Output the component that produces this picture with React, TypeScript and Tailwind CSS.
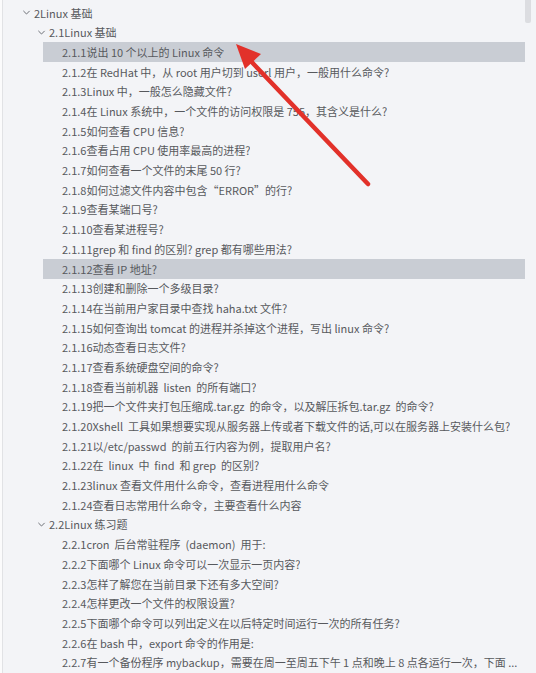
import React from "react"

type Row = { text: string; level: 0 | 1 | 2; open?: boolean; active?: boolean }

const rows: Row[] = [
  { text: "2Linux 基础", level: 0, open: true },
  { text: "2.1Linux 基础", level: 1, open: true },
  { text: "2.1.1说出 10 个以上的 Linux 命令", level: 2, active: true },
  { text: "2.1.2在 RedHat 中，从 root 用户切到 userl 用户，一般用什么命令?", level: 2 },
  { text: "2.1.3Linux 中，一般怎么隐藏文件?", level: 2 },
  { text: "2.1.4在 Linux 系统中，一个文件的访问权限是 755，其含义是什么?", level: 2 },
  { text: "2.1.5如何查看 CPU 信息?", level: 2 },
  { text: "2.1.6查看占用 CPU 使用率最高的进程?", level: 2 },
  { text: "2.1.7如何查看一个文件的末尾 50 行?", level: 2 },
  { text: "2.1.8如何过滤文件内容中包含“ERROR”的行?", level: 2 },
  { text: "2.1.9查看某端口号?", level: 2 },
  { text: "2.1.10查看某进程号?", level: 2 },
  { text: "2.1.11grep 和 find 的区别? grep 都有哪些用法?", level: 2 },
  { text: "2.1.12查看 IP 地址?", level: 2, active: true },
  { text: "2.1.13创建和删除一个多级目录?", level: 2 },
  { text: "2.1.14在当前用户家目录中查找 haha.txt 文件?", level: 2 },
  { text: "2.1.15如何查询出 tomcat 的进程并杀掉这个进程，写出 linux 命令?", level: 2 },
  { text: "2.1.16动态查看日志文件?", level: 2 },
  { text: "2.1.17查看系统硬盘空间的命令?", level: 2 },
  { text: "2.1.18查看当前机器  listen  的所有端口?", level: 2 },
  { text: "2.1.19把一个文件夹打包压缩成.tar.gz  的命令，以及解压拆包.tar.gz  的命令?", level: 2 },
  { text: "2.1.20Xshell  工具如果想要实现从服务器上传或者下载文件的话,可以在服务器上安装什么包?", level: 2 },
  { text: "2.1.21以/etc/passwd  的前五行内容为例，提取用户名?", level: 2 },
  { text: "2.1.22在  linux  中  find  和 grep  的区别?", level: 2 },
  { text: "2.1.23linux 查看文件用什么命令，查看进程用什么命令", level: 2 },
  { text: "2.1.24查看日志常用什么命令，主要查看什么内容", level: 2 },
  { text: "2.2Linux 练习题", level: 1, open: true },
  { text: "2.2.1cron  后台常驻程序  (daemon)  用于:", level: 2 },
  { text: "2.2.2下面哪个 Linux 命令可以一次显示一页内容?", level: 2 },
  { text: "2.2.3怎样了解您在当前目录下还有多大空间?", level: 2 },
  { text: "2.2.4怎样更改一个文件的权限设置?", level: 2 },
  { text: "2.2.5下面哪个命令可以列出定义在以后特定时间运行一次的所有任务?", level: 2 },
  { text: "2.2.6在 bash 中，export 命令的作用是:", level: 2 },
  { text: "2.2.7有一个备份程序 mybackup，需要在周一至周五下午 1 点和晚上 8 点各运行一次，下面 ...", level: 2 },
]

function Chevron() {
  return (
    <svg width="9" height="9" viewBox="0 0 10 10" className="shrink-0">
      <path d="M1.5 3.2 L5 6.7 L8.5 3.2" fill="none" stroke="#6b6e75" strokeWidth="1.1" />
    </svg>
  )
}

function TreeRow({ row }: { row: Row }) {
  const pad = row.level === 0 ? "pl-[22px]" : "pl-[37px]"
  return (
    <div className={`h-[19.7px] flex items-center ${row.level === 2 ? "" : pad}`}>
      {row.level === 2 ? (
        <div
          className={`h-full flex-1 flex items-center ml-[43px] pl-[19px] mr-[11px] ${
            row.active ? "bg-[#c9cdd4]" : ""
          }`}
        >
          <span className="whitespace-pre truncate">{row.text}</span>
        </div>
      ) : (
        <div className="flex items-center gap-[3px]">
          <Chevron />
          <span className="whitespace-pre">{row.text}</span>
        </div>
      )}
    </div>
  )
}

export default function App() {
  return (
    <div
      className="w-[536px] h-[673px] relative overflow-hidden bg-[#f3f4f7] text-[11px] text-[#57595d]"
      style={{ fontFamily: '"Noto Sans CJK SC", "Noto Sans", sans-serif' }}
    >
      {/* left edge */}
      <div className="absolute left-0 top-0 bottom-0 w-[3px] bg-[#fbfbfc] border-r border-[#e1e2e5]" />

      {/* scrollbar thumb */}
      <div className="absolute right-[5px] top-0 w-[6px] h-[23px] bg-[#dcdde1] rounded-b-[2px]" />

      <div className="pt-[3px]">
        {rows.map((r, i) => (
          <TreeRow key={i} row={r} />
        ))}
      </div>

      {/* red annotation arrow */}
      <svg className="absolute left-0 top-0 pointer-events-none" width="536" height="673">
        <line x1="368" y1="184" x2="246" y2="56" stroke="#e2312a" strokeWidth="4.5" strokeLinecap="round" />
        <polygon points="236,44 261,54 245,69" fill="#e2312a" />
      </svg>
    </div>
  )
}
